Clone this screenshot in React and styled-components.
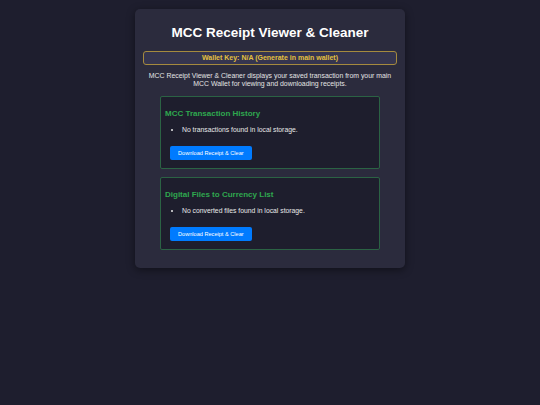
import React from 'react'
import styled, { createGlobalStyle } from 'styled-components'

const SECTIONS = [
  {
    id: 'history',
    title: 'MCC Transaction History',
    empty: 'No transactions found in local storage.'
  },
  {
    id: 'files',
    title: 'Digital Files to Currency List',
    empty: 'No converted files found in local storage.'
  }
]

const GlobalStyle = createGlobalStyle`
  html, body {
    margin: 0;
    padding: 0;
    background: #1e1e2e;
    font-family: 'Liberation Sans', Arial, sans-serif;
  }
`

function Section({ title, empty }) {
  return (
    <Card>
      <Heading>{title}</Heading>
      <Items>
        <li>{empty}</li>
      </Items>
      <Button type="button">Download Receipt &amp; Clear</Button>
    </Card>
  )
}

export default function App() {
  return (
    <Page>
      <GlobalStyle />
      <Container>
        <Title>MCC Receipt Viewer &amp; Cleaner</Title>
        <WalletKey>Wallet Key: N/A (Generate in main wallet)</WalletKey>
        <Description>
          MCC Receipt Viewer &amp; Cleaner displays your saved transaction from
          your main MCC Wallet for viewing and downloading receipts.
        </Description>
        {SECTIONS.map(section => (
          <Section key={section.id} {...section} />
        ))}
      </Container>
    </Page>
  )
}

const Page = styled.div`
  min-height: 405px;
  padding-top: 9px;
  box-sizing: border-box;
`

const Container = styled.div`
  width: 270px;
  margin: 0 auto;
  padding: 8px 8px 18px;
  box-sizing: border-box;
  background: #2b2b3d;
  border-radius: 5px;
  box-shadow: 0 2px 8px rgba(0, 0, 0, 0.45);
  text-align: center;
  color: #e6e6e6;
`

const Title = styled.h1`
  margin: 8px 0 10px;
  font-size: 13.5px;
  line-height: 16px;
  font-weight: bold;
  color: #ffffff;
`

const WalletKey = styled.div`
  padding: 2px 4px;
  line-height: 8px;
  font-size: 7px;
  font-weight: bold;
  color: #e4c040;
  background: #35354f;
  border: 1px solid #a58a3e;
  border-radius: 3px;
`

const Description = styled.p`
  margin: 7px 0 0;
  font-size: 6.9px;
  line-height: 8px;
  color: #e4e4e4;
`

const Card = styled.section`
  width: 220px;
  margin: 8px auto 0;
  padding: 4px;
  box-sizing: border-box;
  text-align: left;
  background: #1e1e2d;
  border: 1px solid #2b6344;
  border-radius: 2px;
`

const Heading = styled.h2`
  margin: 8px 0 0;
  font-size: 8px;
  line-height: 10px;
  font-weight: bold;
  color: #2fa84f;
`

const Items = styled.ul`
  margin: 7px 0 12px;
  padding-left: 17px;
  font-size: 6.8px;
  line-height: 8px;
  color: #e8e8e8;
`

const Button = styled.button`
  display: block;
  margin: 0 0 4px 5px;
  height: 14px;
  padding: 0 8px;
  border: none;
  border-radius: 2px;
  background: #007bff;
  color: #ffffff;
  font-family: 'Liberation Sans', Arial, sans-serif;
  font-size: 5.6px;
  cursor: pointer;
`
